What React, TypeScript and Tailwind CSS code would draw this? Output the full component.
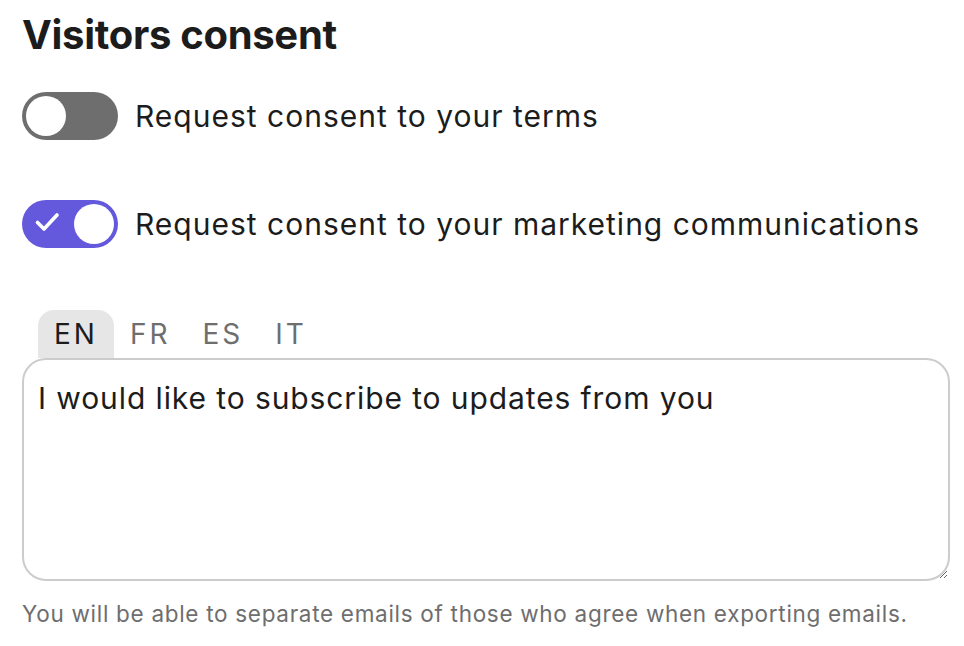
import { useState } from "react";

function Toggle({ on, onChange }: { on: boolean; onChange: () => void }) {
  return (
    <button
      type="button"
      onClick={onChange}
      className={`relative h-[48px] w-[96px] shrink-0 rounded-full ${on ? "bg-[#6458dc]" : "bg-[#6e6e6e]"}`}
    >
      {on && (
        <svg
          className="absolute left-[12px] top-[11px]"
          width="26"
          height="22"
          viewBox="0 0 26 22"
          fill="none"
          stroke="white"
          strokeWidth="3.6"
          strokeLinecap="round"
          strokeLinejoin="round"
        >
          <path d="M3.5 11.5l6.5 6.5L23 4" />
        </svg>
      )}
      <span
        className={`absolute top-[4px] h-[40px] w-[40px] rounded-full bg-white ${on ? "left-[52px]" : "left-[4px]"}`}
      />
    </button>
  );
}

const langs = ["EN", "FR", "ES", "IT"];

export default function App() {
  const [terms, setTerms] = useState(false);
  const [marketing, setMarketing] = useState(true);
  const [lang, setLang] = useState("EN");

  return (
    <div
      className="min-h-screen bg-white pl-[22px] pr-[14px] pt-[11px] text-[#1c1c1c]"
      style={{ fontFamily: "Inter, 'Noto Sans', sans-serif" }}
    >
      <h1 className="text-[40px] font-bold leading-[48px] tracking-[-0.3px]">
        Visitors consent
      </h1>

      <div className="mt-[33px] flex items-center gap-[17px]">
        <Toggle on={terms} onChange={() => setTerms(!terms)} />
        <span className="text-[30px] leading-[48px] tracking-[1px]">
          Request consent to your terms
        </span>
      </div>

      <div className="mt-[60px] flex items-center gap-[17px]">
        <Toggle on={marketing} onChange={() => setMarketing(!marketing)} />
        <span className="text-[30px] leading-[48px] tracking-[1px]">
          Request consent to your marketing communications
        </span>
      </div>

      <div className="mt-[62px] flex pl-[16px]">
        {langs.map((l) => (
          <button
            key={l}
            type="button"
            onClick={() => setLang(l)}
            className={`h-[48px] rounded-t-[16px] px-[16px] text-[28px] leading-[48px] tracking-[3px] ${
              lang === l ? "bg-[#e6e6e6] text-[#1c1c1c]" : "text-[#6e6e6e]"
            }`}
          >
            {l}
          </button>
        ))}
      </div>

      <textarea
        defaultValue="I would like to subscribe to updates from you"
        className="block h-[223px] w-[928px] resize-y rounded-[24px] border-2 border-[#cccccc] px-[14px] py-[18px] text-[30px] leading-[40px] tracking-[0.9px] text-[#1c1c1c] outline-none"
      />

      <p className="mt-[19px] text-[22.5px] leading-[28px] tracking-[0.7px] text-[#6e6e6e]">
        You will be able to separate emails of those who agree when exporting emails.
      </p>
    </div>
  );
}
